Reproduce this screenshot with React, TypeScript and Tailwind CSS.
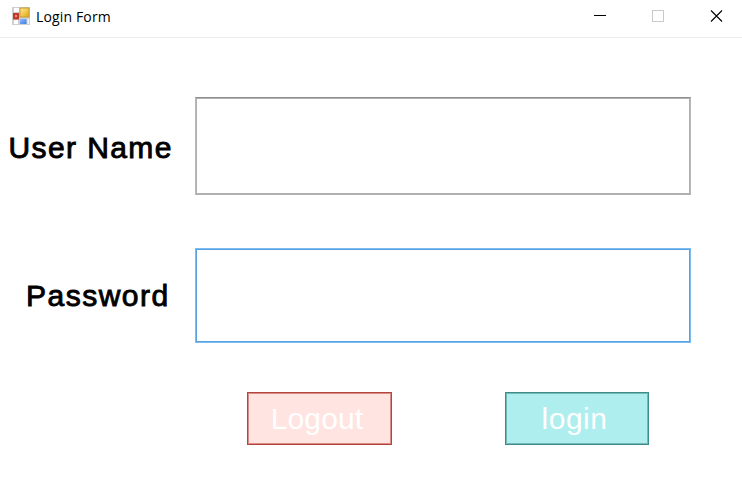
import type { ReactNode } from 'react';

function AppIcon() {
  return (
    <svg className="ml-3 mt-[7px] shrink-0" width="18" height="18" viewBox="0 0 18 18">
      <defs>
        <linearGradient id="gold" x1="0" y1="0" x2="1" y2="1">
          <stop offset="0" stopColor="#ffe88b" />
          <stop offset="1" stopColor="#e3aa12" />
        </linearGradient>
        <linearGradient id="blue" x1="0" y1="0" x2="1" y2="1">
          <stop offset="0" stopColor="#8dbcff" />
          <stop offset="1" stopColor="#3f7de0" />
        </linearGradient>
      </defs>
      <rect width="18" height="18" fill="#cfcfcf" />
      <path d="M2 1h5v4H2zM2 13h4v4H2z" fill="#fff" />
      <rect x="1" y="6" width="6" height="6.5" fill="#c23a2c" />
      <rect x="3" y="8" width="2" height="2" fill="#ec8f80" />
      <rect x="7.5" y="0.5" width="10" height="10" fill="#c39a3a" />
      <rect x="8.5" y="1.5" width="8" height="8" fill="url(#gold)" />
      <rect x="8" y="12" width="6.5" height="5" fill="url(#blue)" />
      <rect x="15.5" y="12" width="1.5" height="5" fill="#f5f5f5" />
    </svg>
  );
}

function TitleBar() {
  return (
    <header className="flex h-[38px] items-start border-b border-[#ededed]">
      <AppIcon />
      <h1 className="ml-1.5 mt-[7px] w-[120px] whitespace-nowrap font-['Open_Sans','Noto_Sans',sans-serif] text-[14px] leading-5 tracking-[0.15px] text-black">
        Login Form
      </h1>
      <div className="ml-auto mr-[19px] mt-[10px] flex gap-[46px]">
        <svg width="13" height="13" viewBox="0 0 13 13" shapeRendering="crispEdges">
          <path d="M1 5.5h12" stroke="#000" />
        </svg>
        <svg width="12" height="12" viewBox="0 0 12 12" shapeRendering="crispEdges">
          <path d="M.5 .5h11v11H.5z" fill="none" stroke="#cacaca" />
        </svg>
        <svg width="13" height="12" viewBox="0 0 13 12">
          <path d="M1 .5l11 11M12 .5L1 11.5" stroke="#000" strokeWidth="1.1" />
        </svg>
      </div>
    </header>
  );
}

function Label({ htmlFor, className, children }: { htmlFor: string; className: string; children: ReactNode }) {
  return (
    <label
      htmlFor={htmlFor}
      className={`${className} w-[195px] shrink-0 whitespace-nowrap text-[30px] leading-9 text-black [-webkit-text-stroke:0.9px_#000]`}
    >
      {children}
    </label>
  );
}

export default function App() {
  return (
    <main className="h-[491px] w-[742px] overflow-hidden bg-white font-['Liberation_Sans',Arial,sans-serif]">
      <TitleBar />
      <form className="flex flex-col pt-[59px]" onSubmit={(e) => e.preventDefault()}>
        <div className="flex items-start">
          <Label htmlFor="user" className="mt-[33px] pl-[8.5px] tracking-[1.4px]">User Name</Label>
          <input
            id="user"
            className="h-[98px] w-[496px] border border-t-[#8f8f8f] border-r-[#b8b8b8] border-b-[#b0b0b0] border-l-[#b8b8b8] bg-white px-2 text-[30px] shadow-[inset_0_0_0_1px_#b0b0b0] outline-none"
          />
        </div>
        <div className="mt-[53px] flex items-start">
          <Label htmlFor="password" className="mt-[30px] pl-[26px] tracking-[1.5px]">Password</Label>
          <input
            id="password"
            type="password"
            className="h-[95px] w-[496px] border border-t-[#7dbbee] border-r-[#7dbbee] border-b-[#7dbbee] border-l-[#7dbbee] bg-white px-2 text-[30px] shadow-[inset_0_0_0_1px_#57a2e2] outline-none"
          />
        </div>
        <div className="mt-[49px] flex pl-[247px]">
          <button type="button" className="h-[53px] w-[145px] border border-[#b5443c] bg-[#ffe4e1] pr-[5px] text-[30px] leading-none tracking-[0.15px] text-white shadow-[inset_0_0_0_1px_#d98a84]">
            Logout
          </button>
          <button type="submit" className="ml-[113px] h-[53px] w-[144px] border border-[#3d8c8c] bg-[#afeeee] pr-[5px] text-[30px] leading-none tracking-[0.5px] text-white shadow-[inset_0_0_0_1px_#74b8b8]">
            login
          </button>
        </div>
      </form>
    </main>
  );
}
